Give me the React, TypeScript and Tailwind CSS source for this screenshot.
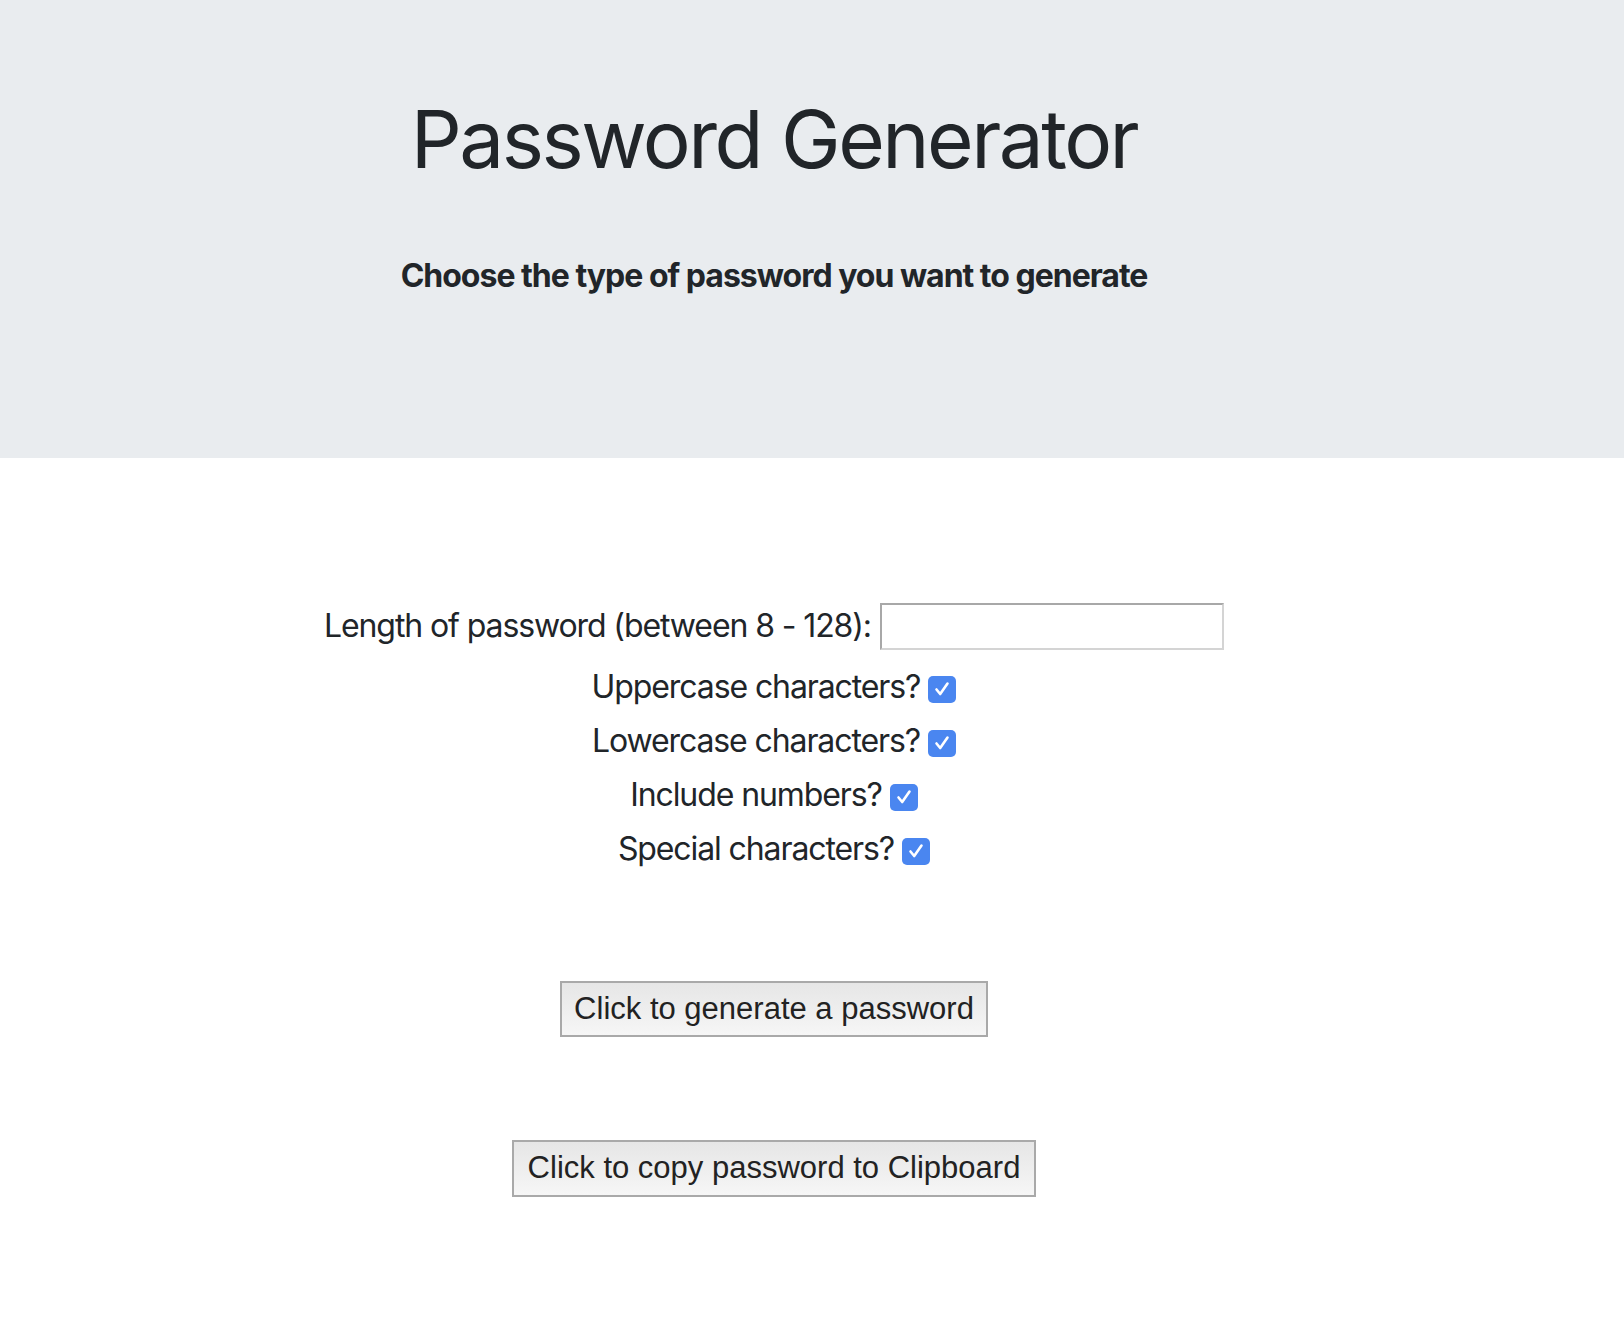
import React, { useState } from 'react';

const Check = ({ checked, onChange }: { checked: boolean; onChange: () => void }) => {
  return <button type="button" onClick={onChange} className={`ml-[8px] mt-[4px] flex h-[27px] w-[28px] items-center justify-center rounded-[5px] ${checked ? 'bg-[#4a86f0]' : 'border border-[#9a9a9a] bg-white'}`}>
      {checked && <svg width="20" height="20" viewBox="0 0 20 20" fill="none">
          <path d="M4.5 10.5 L8.2 15 L15.5 4.5" stroke="white" strokeWidth="2.6" strokeLinecap="round" strokeLinejoin="round" />
        </svg>}
    </button>;
};

const App = () => {
  const [opts, setOpts] = useState({ upper: true, lower: true, nums: true, special: true });
  const [length, setLength] = useState('');
  const toggle = (k: keyof typeof opts) => setOpts({ ...opts, [k]: !opts[k] });

  const rows: { label: string; key: keyof typeof opts }[] = [
    { label: 'Uppercase characters?', key: 'upper' },
    { label: 'Lowercase characters?', key: 'lower' },
    { label: 'Include numbers?', key: 'nums' },
    { label: 'Special characters?', key: 'special' },
  ];

  return <div className="min-h-[1332px] bg-white text-[#212529]" style={{ fontFamily: 'Inter, "Noto Sans", sans-serif' }}>
      {/* Jumbotron */}
      <header className="h-[458px] bg-[#e9ecef]">
        <div className="flex w-[1548px] flex-col items-center pt-[91px]">
          <h1 className="text-[80px] font-normal leading-[1.2] tracking-[-2.5px]">Password Generator</h1>
          <p className="mt-[70px] text-[32px] font-bold leading-[1.2] tracking-[-1px]">Choose the type of password you want to generate</p>
        </div>
      </header>

      <main className="flex w-[1548px] flex-col items-center pt-[145px]">
        <div className="flex items-center text-[32px] leading-[1.2] tracking-[-1.1px]">
          <label>Length of password (between 8 - 128):</label>
          <input value={length} onChange={e => setLength(e.target.value)} className="ml-[9px] h-[47px] w-[344px] border-2 border-t-[#a8a8a8] border-l-[#a8a8a8] border-r-[#d4d4d4] border-b-[#d4d4d4] bg-white px-2 outline-none" />
        </div>
        <div className="mt-[18px] flex flex-col items-center gap-[16px]">
          {rows.map(r => <div key={r.key} className="flex h-[38px] items-center text-[32px] leading-[1.2] tracking-[-1.1px]">
              <span>{r.label}</span>
              <Check checked={opts[r.key]} onChange={() => toggle(r.key)} />
            </div>)}
        </div>

        <button className="mt-[113px] h-[56px] border-2 border-[#a9a9a9] bg-gradient-to-b from-[#e6e6e6] to-[#f6f6f6] px-[12px] text-[31px] text-[#222]" style={{ fontFamily: '"Liberation Sans", Arial, sans-serif' }}>
          Click to generate a password
        </button>
        <button className="mt-[103px] h-[57px] border-2 border-[#a9a9a9] bg-gradient-to-b from-[#e6e6e6] to-[#f6f6f6] px-[14px] text-[31px] text-[#222]" style={{ fontFamily: '"Liberation Sans", Arial, sans-serif' }}>
          Click to copy password to Clipboard
        </button>
      </main>
    </div>;
};

export default App;
